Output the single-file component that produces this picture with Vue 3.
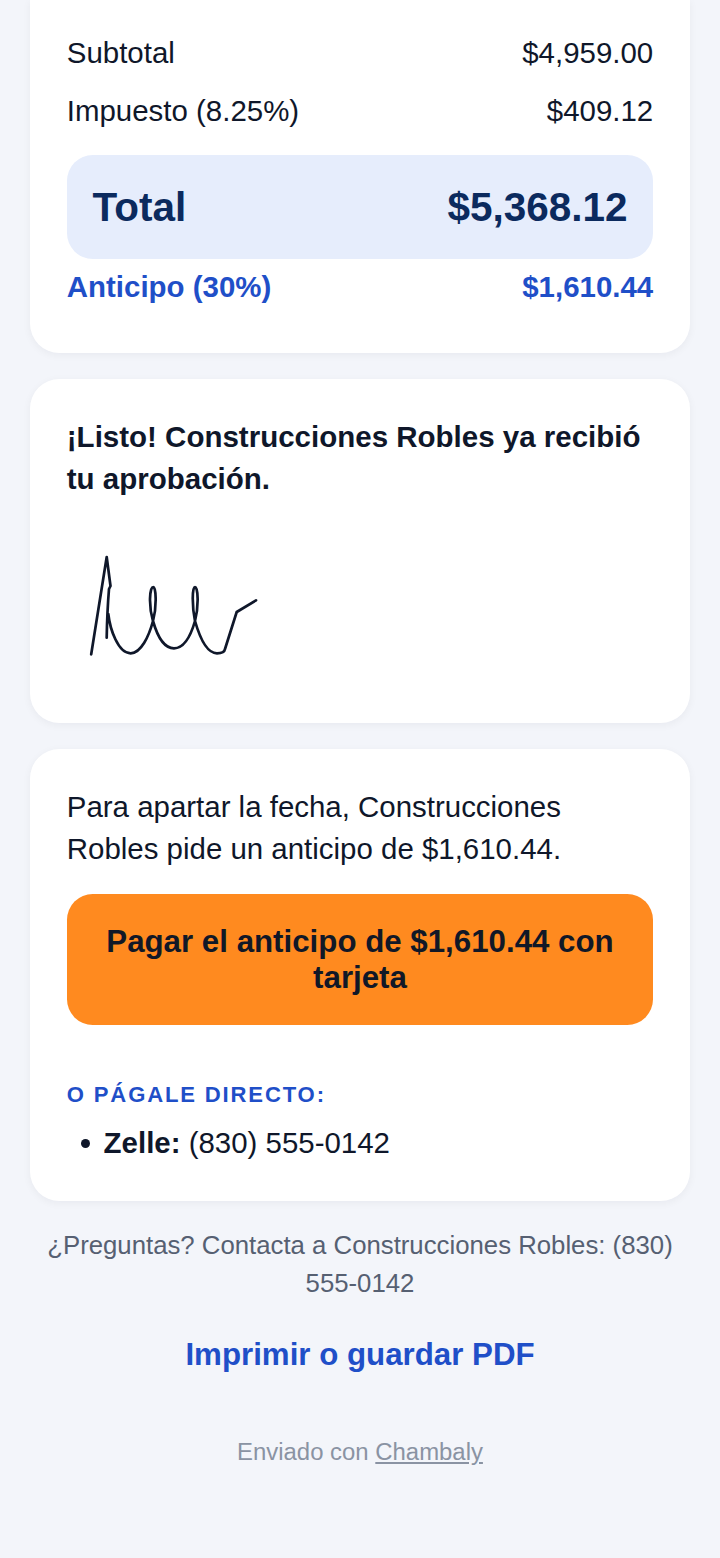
<template>
  <div class="page">
    <section class="card card-totals">
      <div class="row"><span>Subtotal</span><span>$4,959.00</span></div>
      <div class="row"><span>Impuesto (8.25%)</span><span>$409.12</span></div>
      <div class="total-box"><span>Total</span><span>$5,368.12</span></div>
      <div class="row deposit"><span>Anticipo (30%)</span><span>$1,610.44</span></div>
    </section>

    <section class="card card-signed">
      <p class="signed-text">¡Listo! Construcciones Robles ya recibió tu aprobación.</p>
      <svg class="signature" width="220" height="140" viewBox="0 0 220 140" fill="none">
        <path
          d="M31.2 123.3 L46.7 26 L50.5 55 L49 58 C48 70 47 90 46.7 106.7 M48.3 83 C50 98 58 122.3 70.7 122.3 C81 122.3 89 105 93 90 C97 75 96 56 93.3 56 C89.5 56 88.5 75 93 90 C97 104 104 117.3 114 117.3 C124 117.3 131 104 135 90 C139 75 138 56 135 56 C132 56 132 75 135 90 C139 104 146 122.3 157 122.3 C161 122.3 164.5 121 165 118 L176.7 81 L196 69.3"
          stroke="#0f172a"
          stroke-width="2.7"
          stroke-linecap="round"
          stroke-linejoin="round"
        />
      </svg>
    </section>

    <section class="card card-pay">
      <p class="pay-text">Para apartar la fecha, Construcciones Robles pide un anticipo de $1,610.44.</p>
      <button class="pay-button" type="button">Pagar el anticipo de $1,610.44 con tarjeta</button>
      <h3 class="direct-title">O PÁGALE DIRECTO:</h3>
      <ul class="direct-list">
        <li><strong>Zelle:</strong> (830) 555-0142</li>
      </ul>
    </section>

    <p class="questions">¿Preguntas? Contacta a Construcciones Robles: (830) 555-0142</p>
    <a class="print-link">Imprimir o guardar PDF</a>
    <p class="sent-by">Enviado con <span class="brand">Chambaly</span></p>
  </div>
</template>

<script setup>
</script>

<style>
html, body {
  margin: 0;
  background: #f3f5fa;
}
</style>

<style scoped>
.page {
  box-sizing: border-box;
  height: 1558px;
  padding: 0 30px;
  overflow: hidden;
  background: #f3f5fa;
  font-family: "Liberation Sans", Arial, sans-serif;
  font-size: 29.44px;
  color: #0f172a;
}

.card {
  box-sizing: border-box;
  background: #fff;
  border-radius: 29.44px;
  padding: 36.8px;
  margin-bottom: 26px;
  box-shadow: 0 2px 8px rgba(15, 23, 42, 0.05);
}

.card-totals {
  height: 353px;
  padding-top: 32px;
  border-radius: 0 0 29.44px 29.44px;
}

.row {
  display: flex;
  justify-content: space-between;
  height: 42px;
  line-height: 42px;
  margin-bottom: 16px;
}

.total-box {
  display: flex;
  justify-content: space-between;
  align-items: center;
  height: 104px;
  box-sizing: border-box;
  padding: 0 25.76px;
  margin: 23px 0 7px;
  border-radius: 25.76px;
  background: #e6edfc;
  color: #0b2a5e;
  font-size: 40.48px;
  font-weight: 700;
}

.deposit {
  margin-bottom: 0;
  color: #1f4fc8;
  font-weight: 700;
}

.card-signed {
  height: 344px;
}

.signed-text {
  margin: 0;
  font-size: 29.5px;
  font-weight: 700;
  line-height: 42px;
}

.signature {
  display: block;
  margin: 31px 0 0 -6.8px;
}

.card-pay {
  height: 452px;
  margin-bottom: 26px;
}

.pay-text {
  margin: 0 0 24px;
  line-height: 42px;
}

.pay-button {
  display: block;
  box-sizing: border-box;
  width: 100%;
  height: 131px;
  padding: 2px 24px 0;
  border: none;
  border-radius: 25.76px;
  background: #ff8a1f;
  color: #111827;
  font-family: inherit;
  font-size: 31.28px;
  font-weight: 700;
  line-height: 36px;
}

.direct-title {
  margin: 56px 0 0;
  color: #1f4fc8;
  font-size: 22.08px;
  font-weight: 700;
  letter-spacing: 1.84px;
  line-height: 27px;
}

.direct-list {
  margin: 14px 0 0;
  padding-left: 36.8px;
  line-height: 42px;
  list-style: none;
}

.direct-list li {
  position: relative;
}

.direct-list li::before {
  content: "";
  position: absolute;
  left: -22.5px;
  top: 17px;
  width: 9px;
  height: 9px;
  border-radius: 50%;
  background: #0f172a;
}

.questions {
  margin: 0;
  text-align: center;
  color: #566072;
  font-size: 25.76px;
  line-height: 37.5px;
}

.print-link {
  display: block;
  margin-top: 33px;
  text-align: center;
  color: #1f4fc8;
  font-size: 31.28px;
  font-weight: 700;
  line-height: 40px;
}

.sent-by {
  margin: 62px 0 0;
  text-align: center;
  color: #8a93a3;
  font-size: 23.92px;
  line-height: 30px;
}

.brand {
  text-decoration: underline;
}
</style>
